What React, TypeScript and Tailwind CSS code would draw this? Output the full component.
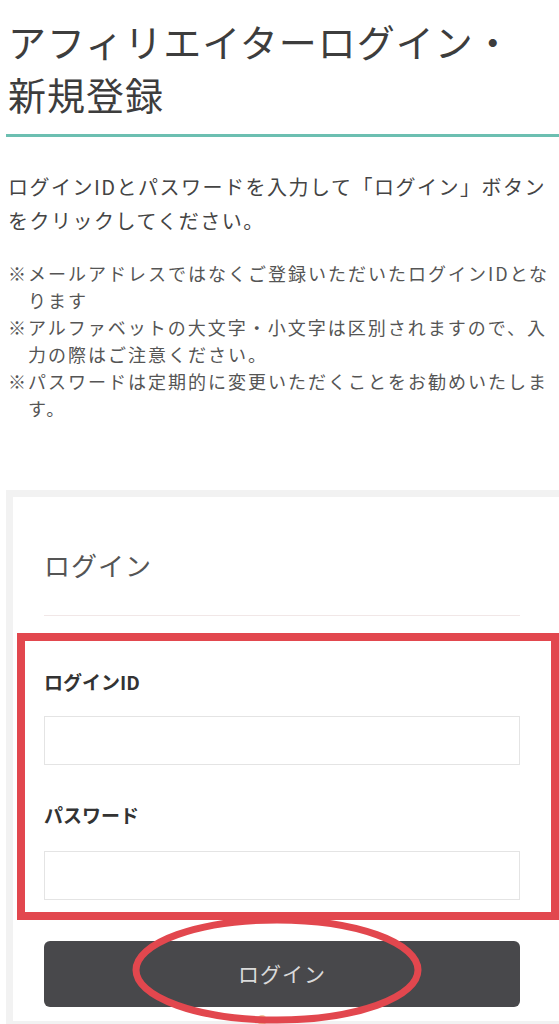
const notes = [
  "※メールアドレスではなくご登録いただいたログインIDとなります",
  "※アルファベットの大文字・小文字は区別されますので、入力の際はご注意ください。",
  "※パスワードは定期的に変更いただくことをお勧めいたします。",
];

function Field({ label, type, gap }: { label: string; type: string; gap: string }) {
  return (
    <div>
      <label className="block text-[19px] font-bold leading-[28px] text-[#333]">{label}</label>
      <input
        type={type}
        className={`${gap} block h-[49px] w-full border border-[#e4e4e4] bg-white px-3 outline-none`}
      />
    </div>
  );
}

export default function App() {
  return (
    <div className="relative h-[1024px] overflow-hidden bg-white font-['Noto_Sans_CJK_JP',sans-serif] text-[#444]">
      {/* ---- Header ---- */}
      <div className="ml-[6px] border-b-[3px] border-[#6cbfb1] pb-[14px] pt-[14px]">
        <h1 className="pl-[2px] pr-3 text-[38px] font-normal leading-[53px] tracking-[1px] text-[#3d3d3d]">
          アフィリエイターログイン・新規登録
        </h1>
      </div>

      {/* ---- Description ---- */}
      <div className="px-2">
        <p className="mt-[33px] text-[20px] leading-[34px] tracking-[1.5px] text-[#444]">
          ログインIDとパスワードを入力して「ログイン」ボタンをクリックしてください。
        </p>
        <ul className="mt-[22px]">
          {notes.map((n) => (
            <li
              key={n}
              className="pl-[20px] -indent-[20px] text-[18px] leading-[27px] tracking-[2px] text-[#555]"
            >
              {n}
            </li>
          ))}
        </ul>
      </div>

      {/* ---- Login card ---- */}
      <div className="ml-[6px] mt-[68px] border-[7px] border-r-0 border-[#f2f2f2] bg-white pb-[14px] pl-[31px] pr-[39px] pt-[50px]">
        <h2 className="border-b border-[#f1e7e7] pb-[32px] text-[26px] font-normal leading-[36px] tracking-[1px] text-[#555]">
          ログイン
        </h2>
        <div className="mt-[52px] flex flex-col gap-[36px]">
          <Field label="ログインID" type="text" gap="mt-[20px]" />
          <Field label="パスワード" type="password" gap="mt-[22px]" />
        </div>
        <button className="mt-[41px] h-[66px] w-full rounded-[6px] bg-[#48484b] text-[21px] tracking-[1px] text-[#dadada]">
          ログイン
        </button>
      </div>

      {/* ---- Annotations ---- */}
      <div className="absolute left-[17px] top-[633px] h-[287px] w-[542px] border-[8px] border-[#e2474e]" />
      <div className="absolute left-[257px] top-[1015px] h-[10px] w-[10px] rounded-full bg-[#f1c79e]" />
      <svg className="absolute left-0 top-0" width="559" height="1024" viewBox="0 0 559 1024">
        <ellipse cx="277" cy="970" rx="141" ry="50" fill="none" stroke="#e2474e" strokeWidth="7" />
      </svg>
    </div>
  );
}
